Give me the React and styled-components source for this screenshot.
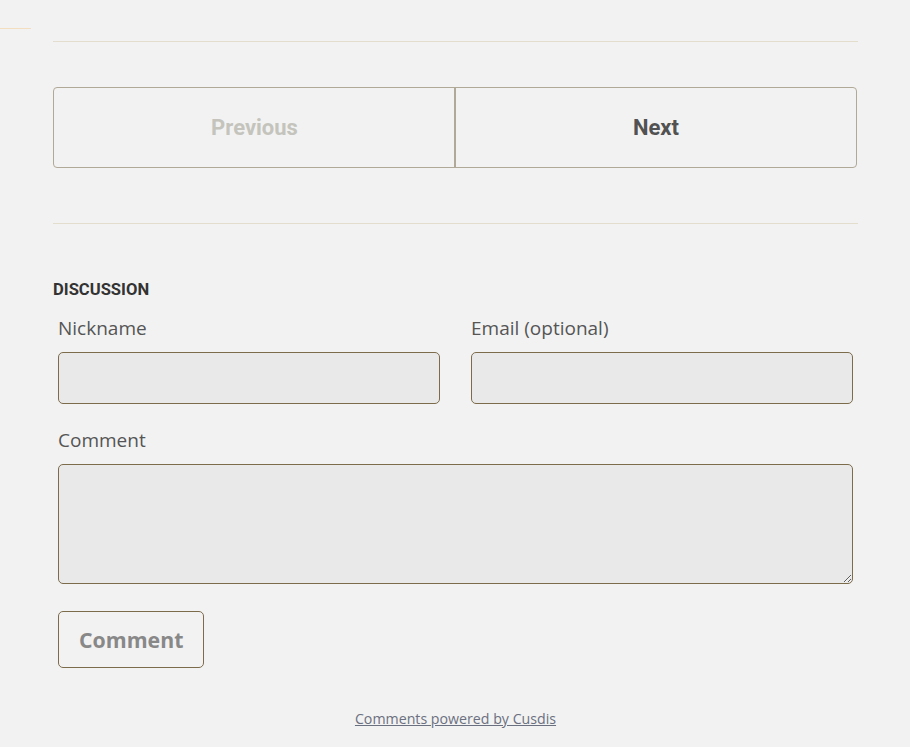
import React from "react";
import styled, { createGlobalStyle } from "styled-components";

const Global = createGlobalStyle`
  html, body { margin: 0; padding: 0; background: #f2f2f2; }
  body { font-family: "Open Sans", "Liberation Sans", sans-serif; }
  * { box-sizing: border-box; }
`;

const Page = styled.div`
  padding-top: 28px;
  min-height: 747px;
`;

const Accent = styled.div`
  width: 31px;
  height: 1px;
  background: #f3dfbf;
`;

const Main = styled.main`
  margin: 12px 0 0 53px;
  width: 805px;
`;

const Rule = styled.hr`
  border: 0;
  height: 1px;
  margin: ${(p) => p.$mt || 0}px 0 0;
  background: #e3ddce;
`;

const Pager = styled.nav`
  display: grid;
  grid-template-columns: 1fr 1fr;
  margin-top: 45px;
  width: 804px;
  height: 81px;
  border: 1px solid #b1a998;
  border-radius: 4px;
`;

const PageLink = styled.a`
  display: flex;
  align-items: center;
  justify-content: center;
  font-family: Roboto, "Liberation Sans", sans-serif;
  font-weight: 700;
  font-size: 22px;
  color: ${(p) => (p.$disabled ? "#c4c4bd" : "#525252")};
  border-left: ${(p) => (p.$divider ? "2px solid #b1a998" : "0")};
  margin-left: ${(p) => (p.$divider ? "-1px" : "0")};
  text-decoration: none;
`;

const Heading = styled.h3`
  margin: 56px 0 0;
  font-family: Roboto, "Liberation Sans", sans-serif;
  font-weight: 700;
  font-size: 16.6px;
  line-height: 20px;
  color: #333;
`;

const Comments = styled.section`
  padding: 0 5px;
  margin-top: 16px;
`;

const Row = styled.div`
  display: grid;
  grid-template-columns: 1fr 1fr;
  column-gap: 31px;
  margin-bottom: ${(p) => p.$mb || 0}px;
`;

const Field = styled.div`
  display: flex;
  flex-direction: column;
`;

const Label = styled.label`
  font-size: 19px;
  line-height: 24px;
  color: #555;
  margin-bottom: 12px;
`;

const Input = styled.input`
  height: 52px;
  width: 100%;
  background: #e9e9e9;
  border: 1px solid #7d6c4c;
  border-radius: 5px;
  font: inherit;
  outline: none;
`;

const TextArea = styled.textarea`
  height: 120px;
  width: 100%;
  background: #e9e9e9;
  border: 1px solid #7d6c4c;
  border-radius: 5px;
  font: inherit;
  outline: none;
  display: block;
`;

const SubmitButton = styled.button`
  margin-top: 27px;
  height: 57px;
  padding: 0 20px;
  background: transparent;
  border: 1px solid #7d6c4c;
  border-radius: 5px;
  font-family: "Open Sans", "Liberation Sans", sans-serif;
  font-weight: 700;
  font-size: 21.3px;
  color: #888;
  cursor: pointer;
`;

const Footer = styled.div`
  margin-top: 41px;
  text-align: center;
  font-size: 14.2px;
  line-height: 20px;
`;

const FooterLink = styled.a`
  color: #6b7080;
  text-decoration: underline;
`;

export default function App() {
  return (
    <>
      <Global />
      <Page>
        <Accent />
        <Main>
          <Rule />
          <Pager>
            <PageLink $disabled>Previous</PageLink>
            <PageLink $divider href="#">Next</PageLink>
          </Pager>
          <Rule $mt={55} />
          <Heading>DISCUSSION</Heading>
          <Comments>
            <Row $mb={24}>
              <Field>
                <Label>Nickname</Label>
                <Input type="text" />
              </Field>
              <Field>
                <Label>Email (optional)</Label>
                <Input type="email" />
              </Field>
            </Row>
            <Field>
              <Label>Comment</Label>
              <TextArea />
            </Field>
            <SubmitButton>Comment</SubmitButton>
            <Footer>
              <FooterLink href="#">Comments powered by Cusdis</FooterLink>
            </Footer>
          </Comments>
        </Main>
      </Page>
    </>
  );
}
